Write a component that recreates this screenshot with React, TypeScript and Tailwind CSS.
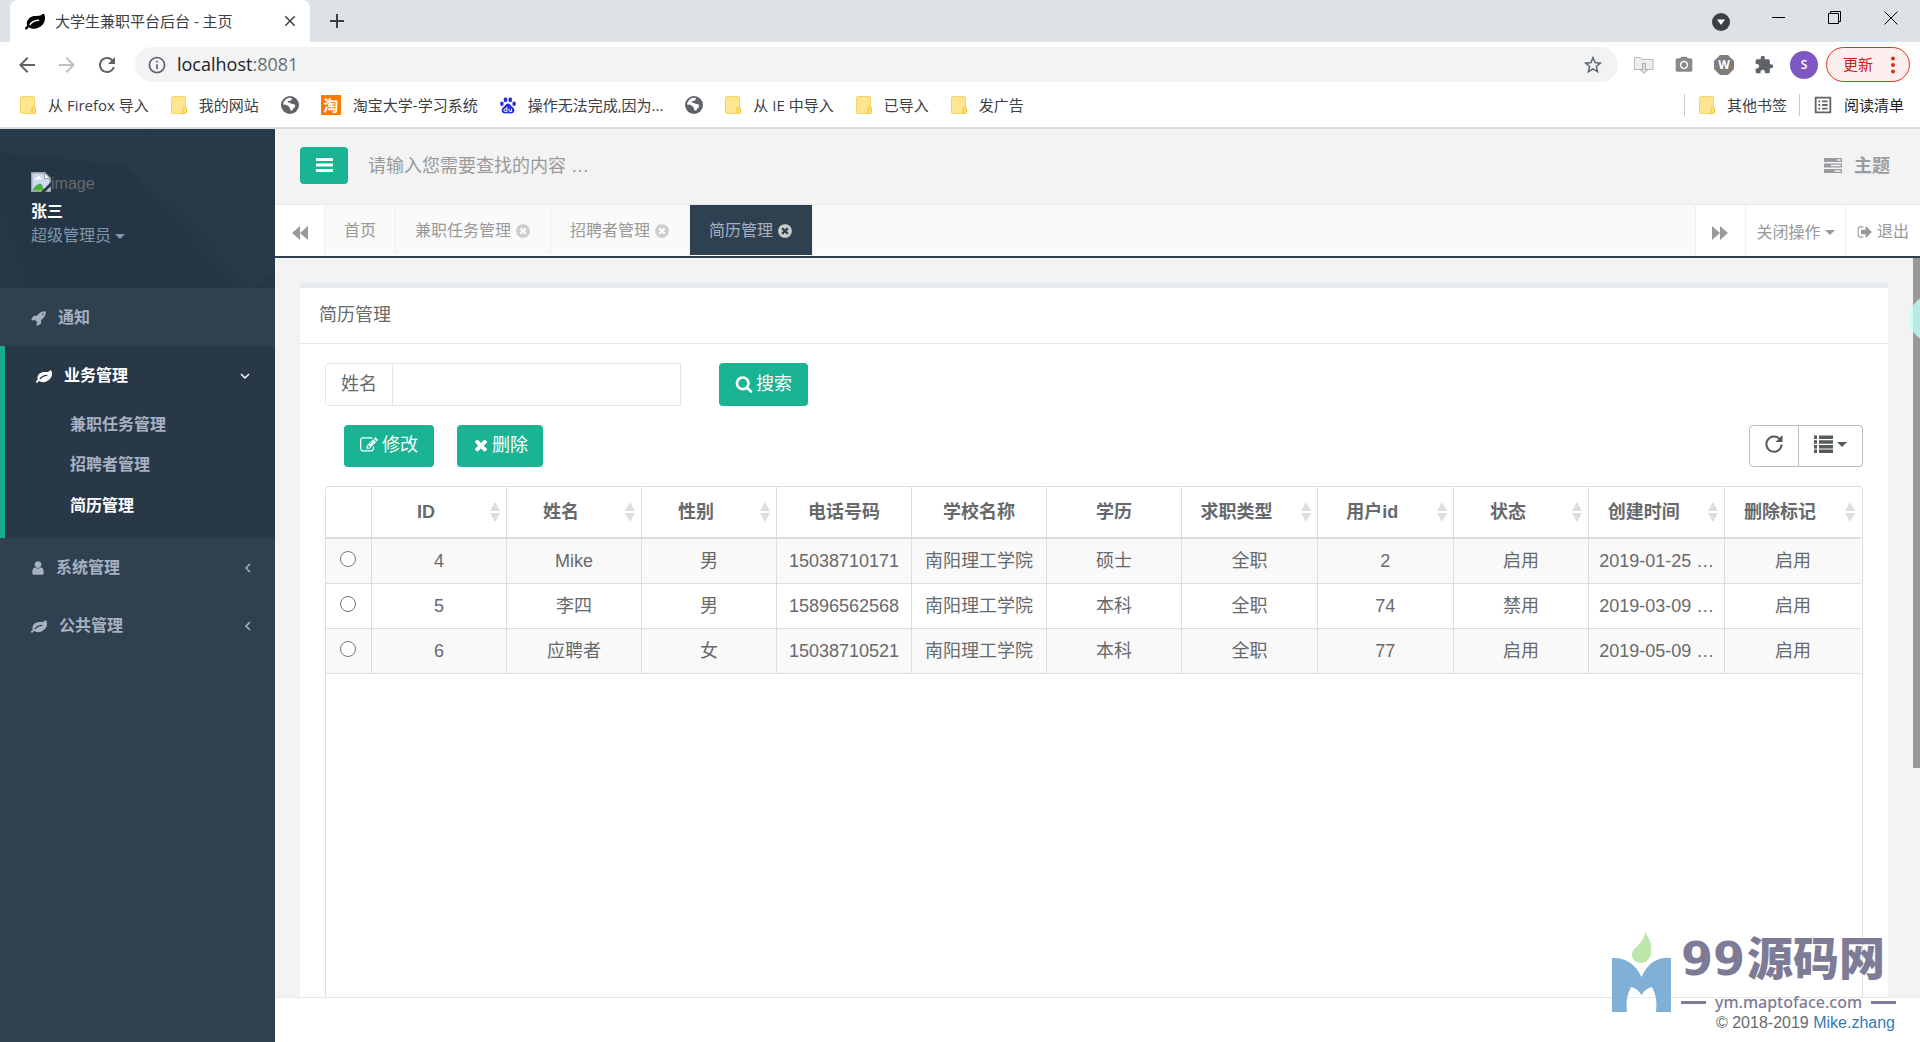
import React from 'react';
import {
  MdArrowBack,
  MdArrowForward,
  MdClose,
  MdExtension,
  MdInfoOutline,
  MdOutlineListAlt,
  MdPhotoCamera,
  MdRefresh,
  MdStarBorder,
} from 'react-icons/md';

const PATHS = {
  leaf: 'M1280 832q0-26-19-45t-45-19q-172 0-318 49.5t-259.5 134-235.5 219.5q-19 21-19 45 0 26 19 45t45 19q24 0 45-19 27-24 74-71t67-66q137-124 268.5-176t313.5-52q26 0 45-19t19-45zm512-198q0 95-20 193-46 224-184.5 383t-357.5 268q-214 108-438 108-148 0-286-47-15-5-88-42t-96-37q-16 0-39.5 32t-45 70-52.5 70-60 32q-43 0-63.5-17.5t-45.5-59.5q-2-4-6-11t-5.5-10-3-9.5-1.5-13.5q0-35 31-73.5t68-65.5 68-56 31-48q0-4-14-38t-16-44q-9-51-9-104 0-115 43.5-220t119-184.5 170.5-139 204-95.5q55-18 145-25.5t179.5-9 178.5-6 163.5-24 113.5-56.5l29.5-29.5 29.5-28 27-20 36.5-16 43.5-4.5q39 0 70.5 46t47.5 112 24 124 8 96z',
  user: 'M1536 1399q0 109-62.5 187t-150.5 78h-854q-88 0-150.5-78t-62.5-187q0-85 8.5-160.5t31.5-152 58.5-131 94-89 134.5-34.5q131 128 313 128t313-128q76 0 134.5 34.5t94 89 58.5 131 31.5 152 8.5 160.5zm-256-887q0 159-112.5 271.5t-271.5 112.5-271.5-112.5-112.5-271.5 112.5-271.5 271.5-112.5 271.5 112.5 112.5 271.5z',
  rocket: 'M1440 448q0-40-28-68t-68-28-68 28-28 68 28 68 68 28 68-28 28-68zm224-288q0 249-75.5 430.5t-253.5 360.5q-81 80-195 176l-20 379q-2 16-16 26l-384 224q-7 4-16 4-12 0-23-9l-64-64q-13-14-8-32l85-276-281-281-276 85q-3 1-9 1-14 0-23-9l-64-64q-17-19-5-39l224-384q10-14 26-16l379-20q96-114 176-195 188-187 358-258t431-71q14 0 24 9.500t10 22.5z',
  timesCircle: 'M1277 1122q0-26-19-45l-181-181 181-181q19-19 19-45 0-27-19-46l-90-90q-19-19-46-19-26 0-45 19l-181 181-181-181q-19-19-45-19-27 0-46 19l-90 90q-19 19-19 46 0 26 19 45l181 181-181 181q-19 19-19 45 0 27 19 46l90 90q19 19 46 19 26 0 45-19l181-181 181 181q19 19 45 19 27 0 46-19l90-90q19-19 19-46zm387-226q0 209-103 385.5t-279.5 279.5-385.5 103-385.5-103-279.5-279.5-103-385.500 103-385.5 279.5-279.5 385.5-103 385.5 103 279.5 279.5 103 385.5z',
  times: 'M1490 1322q0 40-28 68l-136 136q-28 28-68 28t-68-28l-294-294-294 294q-28 28-68 28t-68-28l-136-136q-28-28-28-68t28-68l294-294-294-294q-28-28-28-68t28-68l136-136q28-28 68-28t68 28l294 294 294-294q28-28 68-28t68 28l136 136q28 28 28 68t-28 68l-294 294 294 294q28 28 28 68z',
  edit: 'M888 1184l116-116-152-152-116 116v56h96v96h56zm440-720q-16-16-33 1l-350 350q-17 17-1 33t33-1l350-350q17-17 1-33zm80 594v190q0 119-84.5 203.5t-203.5 84.5h-832q-119 0-203.5-84.5t-84.5-203.5v-832q0-119 84.500-203.5t203.5-84.5h832q63 0 117 25 15 7 18 23 3 17-9 29l-49 49q-14 14-32 8-23-6-45-6h-832q-66 0-113 47t-47 113v832q0 66 47 113t113 47h832q66 0 113-47t47-113v-126q0-13 9-22l64-64q15-15 35-7t20 29zm-96-738l288 288-672 672h-288v-288zm444 132l-92 92-288-288 92-92q28-28 68-28t68 28l152 152q28 28 28 68t-28 68z',
  search: 'M1216 832q0-185-131.5-316.5t-316.5-131.5-316.5 131.5-131.5 316.5 131.5 316.5 316.5 131.5 316.5-131.5 131.5-316.5zm512 832q0 52-38 90t-90 38q-54 0-90-38l-343-342q-179 124-399 124-143 0-273.5-55.5t-225-150-150-225-55.5-273.5 55.5-273.5 150-225 225-150 273.5-55.5 273.5 55.5 225 150 150 225 55.5 273.5q0 220-124 399l343 343q37 37 37 90z',
  signOut: 'M704 1440q0 4 1 20t.5 26.5-3 23.5-10 19.5-20.5 6.5h-320q-119 0-203.5-84.5t-84.5-203.5v-704q0-119 84.5-203.5t203.5-84.5h320q13 0 22.5 9.5t9.5 22.5q0 4 1 20t.5 26.5-3 23.5-10 19.5-20.5 6.5h-320q-66 0-113 47t-47 113v704q0 66 47 113t113 47h312l11.5 1 11.5 3 8 5.5 7 9 2 13.5zm928-544q0 26-19 45l-544 544q-19 19-45 19t-45-19-19-45v-288h-448q-26 0-45-19t-19-45v-384q0-26 19-45t45-19h448v-288q0-26 19-45t45-19 45 19l544 544q19 19 19 45z',
};

type IconProps = { name: keyof typeof PATHS; className?: string };

const Icon: React.FC<IconProps> = ({ name, className = 'size-4' }) => (
  <svg viewBox="0 0 1792 1792" fill="currentColor" className={`shrink-0 ${className}`} aria-hidden="true">
    <path d={PATHS[name]} />
  </svg>
);

const Caret: React.FC = () => (
  <svg viewBox="0 0 10 5" fill="currentColor" className="h-[5px] w-2.5 shrink-0" aria-hidden="true">
    <path d="M0 0h10L5 5z" />
  </svg>
);

const Chevron: React.FC<{ open?: boolean }> = ({ open }) => (
  <svg viewBox="0 0 10 10" fill="none" stroke="currentColor" strokeWidth="1.5" className="size-2.5" aria-hidden="true">
    <path d={open ? 'M1 3l4 4 4-4' : 'M7 1L3 5l4 4'} />
  </svg>
);

const Folder: React.FC = () => (
  <svg viewBox="0 0 16 18" className="h-[18px] w-4 shrink-0" aria-hidden="true">
    <rect x="0.500" y="0.500" width="14" height="17" rx="1" fill="#ffe591" stroke="#f6d367" />
    <rect x="12" y="11.500" width="3.500" height="6" rx="1" fill="#ffe27a" stroke="#f0c437" />
  </svg>
);

// dark globe with light continents
const Globe: React.FC = () => (
  <svg viewBox="0 0 18 18" className="size-[18px] shrink-0" aria-hidden="true">
    <circle cx="9" cy="9" r="9" fill="#5f6368" />
    <path d="M2 8.500q3 0 5 1.200t2 3.300q0 1.500 1.500 1.500t1.700-2q2-.5 2-2.700 0-1.800-2.500-1.800-1.200 0-2.200-.8-1-1-2.500-.7Q6 6.500 7 5q2.500.3 3.500-1.200L11 2Q4 .500 2 8.500z" fill="#fff" />
  </svg>
);

const Taobao: React.FC = () => (
  <span className="flex size-5 items-center justify-center bg-[#ff7a00] text-[15px] leading-none font-bold text-white">淘</span>
);

const Baidu: React.FC = () => (
  <svg viewBox="0 0 16 17" fill="#2932e1" className="h-[17px] w-4 shrink-0" aria-hidden="true">
    <ellipse cx="1.900" cy="6.800" rx="1.800" ry="2.300" />
    <ellipse cx="5.500" cy="2.700" rx="1.900" ry="2.500" />
    <ellipse cx="10.300" cy="2.700" rx="1.900" ry="2.500" />
    <ellipse cx="14.100" cy="6.800" rx="1.800" ry="2.300" />
    <path d="M8 6.500c2 0 2.500 1.600 4 3 1.500 1.300 2.600 2.400 2.400 4.300-.3 2-1.900 2.900-3.700 2.700-1.800-.2-3.600-.2-5.400 0-1.800.2-3.400-.7-3.700-2.700-.2-1.900.9-3 2.400-4.300 1.500-1.400 2-3 4-3z" />
    <path d="M6.800 10v4.500H5.300a1.300 1.300 0 010-2.600h1.500M9 11.700v1.800q0 1 1 1h1.500v-2.800" fill="none" stroke="#fff" />
  </svg>
);

const bookmarks = [
  { icon: <Folder />, label: '从 Firefox 导入' },
  { icon: <Folder />, label: '我的网站' },
  { icon: <Globe />, label: '' },
  { icon: <Taobao />, label: '淘宝大学-学习系统' },
  { icon: <Baidu />, label: '操作无法完成,因为...' },
  { icon: <Globe />, label: '' },
  { icon: <Folder />, label: '从 IE 中导入' },
  { icon: <Folder />, label: '已导入' },
  { icon: <Folder />, label: '发广告' },
];

const BrowserChrome: React.FC = () => (
  <header className="shrink-0 border-b-2 border-[#dadce0] bg-white font-['Open_Sans','Noto_Sans_CJK_SC',sans-serif] text-[15px] text-[#3c4043]">
    {/* tab strip */}
    <div className="flex h-[42px] items-stretch bg-[#dee1e6] pl-2.5">
      <div className="flex w-[300px] items-center rounded-t-lg bg-white pr-[11px] pl-[15px]">
        <Icon name="leaf" className="size-5 text-black" />
        <span className="ml-2.5 flex-1 whitespace-nowrap">大学生兼职平台后台 - 主页</span>
        <button type="button" aria-label="关闭标签页"><MdClose className="size-[18px]" /></button>
      </div>
      <button type="button" aria-label="新标签页" className="ml-[19px]">
        <svg viewBox="0 0 16 16" stroke="currentColor" strokeWidth="2" className="size-4" aria-hidden="true"><path d="M8 1v14M1 8h14" /></svg>
      </button>
      <div className="ml-auto flex items-center gap-[42px] pr-[22px] pb-1.5 text-black">
        <svg viewBox="0 0 18 18" className="size-[18px] translate-y-1" aria-hidden="true">
          <circle cx="9" cy="9" r="9" fill="#3c4043" />
          <path d="M5 6.500h8L9 12z" fill="#fff" />
        </svg>
        <svg viewBox="0 0 14 14" stroke="currentColor" className="size-3.5" aria-hidden="true"><path d="M0 6.500h13" /></svg>
        <svg viewBox="0 0 14 14" fill="none" stroke="currentColor" className="size-3.5" aria-hidden="true"><path d="M.5 2.500h10v10h-10zM2.500 2.500v-2h10v10h-2" /></svg>
        <svg viewBox="0 0 14 14" stroke="currentColor" className="size-3.5" aria-hidden="true"><path d="M.5.5l13 13M13.500.5l-13 13" /></svg>
      </div>
    </div>

    {/* address bar */}
    <div className="flex h-[45px] items-center pr-2.5 pl-[15px] text-[#5f6368]">
      <button type="button" aria-label="后退"><MdArrowBack className="size-6" /></button>
      <button type="button" aria-label="前进" className="ml-4 text-[#bdbfc2]"><MdArrowForward className="size-6" /></button>
      <button type="button" aria-label="刷新" className="ml-4"><MdRefresh className="size-6" /></button>
      <div className="ml-4 flex h-[35px] flex-1 items-center rounded-full bg-[#f1f3f4] pr-3.5 pl-3">
        <MdInfoOutline className="size-5" />
        <span className="ml-2.5 flex-1 pb-px text-lg leading-6 text-[#202124]">localhost<span className="text-[#6b6f74]">:8081</span></span>
        <MdStarBorder className="size-[22px]" />
      </div>
      <div className="ml-4 flex items-center gap-5">
        <svg viewBox="0 0 20 20" className="size-5" aria-hidden="true">
          <path d="M.5 14.500V2.500h6l1.500 2h11v10z" fill="#eee" stroke="#b8b8b8" />
          <path d="M8.500 8.500h3v6h2.500l-4 4-4-4h2.500z" fill="#ddd" stroke="#aaa" />
        </svg>
        <MdPhotoCamera className="size-5 text-[#8a8a8a]" />
        <span className="relative flex size-5 items-center justify-center text-xs font-bold text-white">
          <svg viewBox="0 0 20 20" fill="#7d7d7d" className="absolute inset-0 size-5" aria-hidden="true"><path d="M6 0h8l6 6v8l-6 6H6l-6-6V6z" /></svg>
          <span className="relative">W</span>
        </span>
        <MdExtension className="size-5" />
      </div>
      <span className="ml-4 flex size-7 items-center justify-center rounded-full bg-[#7e57c2] text-xs font-semibold text-white">S</span>
      <button type="button" className="ml-2 flex h-[35px] w-[84px] items-center justify-between rounded-full border border-[#d93025] bg-[#fceeed] pr-3.5 pl-4 text-[#c5221f]">
        更新
        <svg viewBox="0 0 4 18" fill="#d93025" className="h-[18px] w-1" aria-hidden="true"><circle cx="2" cy="2.500" r="2" /><circle cx="2" cy="9" r="2" /><circle cx="2" cy="15.500" r="2" /></svg>
      </button>
    </div>

    {/* bookmarks */}
    <nav className="flex h-10 items-center gap-[22px] pr-4 pb-1 pl-5 whitespace-nowrap">
      {bookmarks.map((b, i) => (
        <a key={i} href="#" aria-label={b.label || '书签'} className="flex items-center gap-3">
          {b.icon}
          {b.label && <span>{b.label}</span>}
        </a>
      ))}
      <div className="ml-auto flex items-center gap-3">
        <a href="#" className="flex items-center gap-3 border-l border-[#c8cacd] pl-3.5"><Folder />其他书签</a>
        <a href="#" className="flex items-center gap-2.5 border-l border-[#c8cacd] pl-3 text-[#202124]"><MdOutlineListAlt className="size-[22px] text-[#5f6368]" />阅读清单</a>
      </div>
    </nav>
  </header>
);

const Sidebar: React.FC = () => (
  <aside className="w-[275px] shrink-0 bg-[#2f4050] text-base font-bold text-[#a7b1c2]">
    <div className="relative h-[159px] overflow-hidden bg-[#253747] px-[31px] pt-[43px] font-normal">
      <svg viewBox="0 0 275 159" preserveAspectRatio="none" className="absolute inset-0 size-full" aria-hidden="true">
        <path d="M0 0h150l-25 36-125-12z" fill="#273a49" />
        <path d="M150 0h125v145l-25 14-125-123z" fill="#283a49" />
        <path d="M125 36l110 123H32L0 60V24z" fill="#243646" />
        <path d="M125 36l80 68 34 55h-5z" fill="#263848" />
      </svg>
      <div className="relative">
        <div className="flex h-5 items-center text-[#676a6c]">
          <svg viewBox="0 0 20 20" className="size-5" aria-hidden="true">
            <path d="M.7.700h13l5.600 5.600v13H.7z" fill="#c9d9f7" stroke="#a0a0a0" strokeWidth="1.400" />
            <path d="M13.500 1v5.500H19z" fill="#fff" stroke="#a0a0a0" />
            <path d="M4 7.500q0-2 2-2 1-2.500 3-.5 2 0 2 2.500z" fill="#fff" />
            <path d="M1.500 18.500q4-8 9-6.500l3 6.500z" fill="#4fb13b" />
            <path d="M10 20L20 10v4l-6 6z" fill="#253747" />
          </svg>
          <span className="pt-[3px]">image</span>
        </div>
        <p className="mt-2 leading-6 font-bold text-white">张三</p>
        <button type="button" className="flex items-center gap-1 leading-6 text-[#8095a8]">超级管理员<Caret /></button>
      </div>
    </div>

    <nav>
      <a href="#" className="flex h-[58px] items-center gap-[11px] pt-px pl-[31px]"><Icon name="rocket" />通知</a>
      <div className="border-l-[5px] border-[#19aa8d] bg-[#293846] pb-3">
        <button type="button" className="flex h-[59px] w-full items-center gap-3 pr-[25px] pl-[31px] text-white">
          <Icon name="leaf" />业务管理
          <span className="ml-auto"><Chevron open /></span>
        </button>
        <ul className="pl-[65px]">
          <li><a href="#" className="block h-[40px] leading-[40px]">兼职任务管理</a></li>
          <li><a href="#" className="block h-[40px] leading-[40px]">招聘者管理</a></li>
          <li><a href="#" className="block h-[41px] leading-[41px] text-white">简历管理</a></li>
        </ul>
      </div>
      <button type="button" className="flex h-[58px] w-full items-center gap-2.5 pt-px pr-[22px] pl-[30px]">
        <Icon name="user" />系统管理
        <span className="ml-auto"><Chevron /></span>
      </button>
      <button type="button" className="flex h-[58px] w-full items-center gap-3 pt-px pr-[22px] pl-[31px]">
        <Icon name="leaf" />公共管理
        <span className="ml-auto"><Chevron /></span>
      </button>
    </nav>
  </aside>
);

const TopBar: React.FC = () => (
  <div className="flex h-[75px] shrink-0 items-center px-[25px] pr-[30px] pb-0.5 text-lg text-[#999c9e]">
    <button type="button" aria-label="菜单" className="flex h-[37px] w-12 items-center justify-center rounded-sm bg-[#1ab394] pb-0.5 text-white">
      <svg viewBox="0 0 17 14" fill="currentColor" className="h-3.5 w-[17px]" aria-hidden="true">
        <path d="M0 0h17v3H0zM0 5.500h17v3H0zM0 11h17v3H0z" />
      </svg>
    </button>
    <input aria-label="查找" placeholder="请输入您需要查找的内容 …" className="ml-5 flex-1 bg-transparent outline-none placeholder:text-[#999]" />
    <a href="#" className="flex items-center gap-3 font-bold">
      <svg viewBox="0 0 18 15" className="h-[15px] w-[18px]" fill="currentColor" aria-hidden="true">
        <path fillRule="evenodd" d="M0 0h18v4H0zM13 1.300h3.700v1.400H13zM0 5.500h18v4H0zM7 6.800h9.700v1.400H7zM0 11h18v4H0zM10.500 12.300h6.200v1.400h-6.200z" />
      </svg>
      主题
    </a>
  </div>
);

const tabs = [
  { label: '首页', closable: false },
  { label: '兼职任务管理', closable: true },
  { label: '招聘者管理', closable: true },
  { label: '简历管理', closable: true, active: true },
];

const TabBar: React.FC = () => (
  <div className="flex h-[54px] shrink-0 border-t border-b-2 border-t-[#e7eaec] border-b-[#2f4050] bg-[#fafafa] text-base text-[#999]">
    <button type="button" aria-label="向左" className="flex w-[50px] items-center justify-center border-r border-[#eee] bg-white pt-1">
      <svg viewBox="0 0 16 14" fill="currentColor" className="h-3.5 w-4" aria-hidden="true"><path d="M8 0v14L0 7zM16 0v14L8 7z" /></svg>
    </button>
    <div className="flex flex-1 border-b border-white">
      {tabs.map((t) => (
        <a
          key={t.label}
          href="#"
          className={`flex items-center gap-1 border-r border-[#eee] px-[19px] pt-0.5 ${t.active ? 'bg-[#2f4050] text-[#a7b1c2]' : ''}`}
        >
          {t.label}
          {t.closable && <Icon name="timesCircle" className="size-4 text-[#ccc]" />}
        </a>
      ))}
    </div>
    <button type="button" aria-label="向右" className="flex w-[50px] items-center justify-center border-l border-[#eee] bg-white pt-1 pr-0.5">
      <svg viewBox="0 0 16 14" fill="currentColor" className="h-3.5 w-4" aria-hidden="true"><path d="M0 0v14l8-7zM8 0v14l8-7z" /></svg>
    </button>
    <button type="button" className="flex w-[100px] items-center justify-center gap-1 border-l border-[#eee] bg-white pt-1">关闭操作<Caret /></button>
    <a href="#" className="flex w-[75px] items-center justify-center gap-1 border-l border-[#eee] bg-white pt-0.5"><Icon name="signOut" />退出</a>
  </div>
);

const columns = [
  { label: 'ID', sort: true, fixed: true },
  { label: '姓名', sort: true, fixed: true },
  { label: '性别', sort: true, fixed: true },
  { label: '电话号码', sort: false, fixed: true },
  { label: '学校名称', sort: false, fixed: true },
  { label: '学历', sort: false, fixed: true },
  { label: '求职类型', sort: true },
  { label: '用户id', sort: true },
  { label: '状态', sort: true },
  { label: '创建时间', sort: true },
  { label: '删除标记', sort: true },
];

const rows = [
  ['4', 'Mike', '男', '15038710171', '南阳理工学院', '硕士', '全职', '2', '启用', '2019-01-25 …', '启用'],
  ['5', '李四', '男', '15896562568', '南阳理工学院', '本科', '全职', '74', '禁用', '2019-03-09 …', '启用'],
  ['6', '应聘者', '女', '15038710521', '南阳理工学院', '本科', '全职', '77', '启用', '2019-05-09 …', '启用'],
];

const ResumeTable: React.FC = () => (
  <div className="mt-[19px] min-h-[540px] flex-1 rounded-t border border-[#ddd] pr-px">
    <table className="w-full table-fixed border-separate border-spacing-0 text-center whitespace-nowrap">
      <thead>
        <tr className="h-[52px]">
          <th aria-label="选择" className="w-[46px] border-r border-b-2 border-[#ddd]" />
          {columns.map((c) => (
            <th key={c.label} className={`border-r border-b-2 border-[#ddd] p-0 last:border-r-0 ${c.fixed ? 'w-[135px]' : ''}`}>
              <div className="flex items-center">
                <span className="flex-1">{c.label}</span>
                {c.sort && (
                  <svg viewBox="0 0 10 20" fill="#ddd" className="mr-1.5 ml-2.5 h-5 w-2.5" aria-hidden="true">
                    <path d="M5 0l5 9H0zM5 20l5-9H0z" />
                  </svg>
                )}
              </div>
            </th>
          ))}
        </tr>
      </thead>
      <tbody>
        {rows.map((r) => (
          <tr key={r[0]} className="h-[45px] odd:bg-[#f9f9f9]">
            <td className="border-r border-b border-[#ddd] pr-px pb-1">
              <input type="radio" name="row" aria-label={`选择 ${r[0]}`} className="mx-auto block size-4" />
            </td>
            {r.map((v, i) => (
              <td key={i} className="border-r border-b border-[#ddd] p-0 last:border-r-0">{v}</td>
            ))}
          </tr>
        ))}
      </tbody>
    </table>
  </div>
);

const ResumePanel: React.FC = () => (
  <section className="flex min-h-full flex-col border-t-[5px] border-[#e7eaec] bg-white text-lg">
    <h1 className="flex h-14 shrink-0 items-center border-b border-[#e7eaec] px-[19px] pb-0.5">简历管理</h1>
    <div className="flex flex-1 flex-col px-[25px] pt-[19px]">
      <form className="flex h-[43px] shrink-0" onSubmit={(e) => e.preventDefault()}>
        <label htmlFor="name" className="flex items-center rounded-l-sm border border-[#e5e6e7] px-[15px] pb-0.5">姓名</label>
        <input id="name" type="text" className="w-[288px] border border-l-0 border-[#e5e6e7] px-3 outline-none" />
        <button type="submit" className="ml-[38px] flex items-center gap-[3px] rounded-sm bg-[#1ab394] px-4 pb-0.5 text-white">
          <Icon name="search" className="size-[18px]" />搜索
        </button>
      </form>
      <div className="mt-[19px] flex h-[42px] shrink-0 pl-[19px]">
        <button type="button" className="flex items-center gap-1 rounded-sm bg-[#1ab394] px-4 pb-0.5 text-white">
          <Icon name="edit" className="size-[18px]" />修改
        </button>
        <button type="button" className="ml-[23px] flex items-center gap-0.5 rounded-sm bg-[#1ab394] px-[15px] pb-0.5 text-white">
          <Icon name="times" className="size-[18px]" />删除
        </button>
        <div className="ml-auto flex text-[#555a5d]">
          <button type="button" aria-label="刷新列表" className="flex w-[50px] items-center justify-center rounded-l-sm border border-[#bbb] pb-1">
            <svg viewBox="0 0 18 18" className="size-[18px]" aria-hidden="true">
              <path d="M14.800 4.200A7.600 7.600 0 1 0 16.600 9.500" fill="none" stroke="currentColor" strokeWidth="2" />
              <path d="M17.500 0v7h-7z" fill="currentColor" />
            </svg>
          </button>
          <button type="button" aria-label="列" className="flex w-16 items-center justify-center gap-1 rounded-r-sm border border-l-0 border-[#bbb] pb-1">
            <svg viewBox="0 0 19 18" fill="currentColor" className="h-[18px] w-[19px]" aria-hidden="true">
              <path d="M0 .5h3v3.500H0zM5 .5h14v3.500H5zM0 5.200h3v3.500H0zM5 5.200h14v3.500H5zM0 9.900h3v3.500H0zM5 9.900h14v3.500H5zM0 14.500h3v3.500H0zM5 14.500h14v3.500H5z" />
            </svg>
            <Caret />
          </button>
        </div>
      </div>
      <ResumeTable />
    </div>
  </section>
);

const Watermark: React.FC = () => (
  <div className="pointer-events-none absolute right-6 bottom-[30px] flex items-end gap-2.5 text-[#7d7b95]">
    <svg viewBox="0 0 59 80" className="h-20 w-[59px]" aria-hidden="true">
      <path d="M33 0c6 8 8 17 5 25-3 8-16 8-18-1-1-9 12-11 13-24z" fill="#bfe6aa" />
      <path d="M0 26q20-1 29.500 19Q39 24 59 26v54H44q2-14-4-25-6 1-10.500 8Q25 56 19 55q-6 11-4 25H0z" fill="#80b0d6" />
    </svg>
    <div className="w-[215px] pb-0.5">
      <div className="flex h-[62px] items-start gap-0.5 leading-none">
        <span className="pt-1 font-['DejaVu_Sans'] text-[46px] font-bold">99</span>
        <span className="font-['Noto_Sans_CJK_SC'] text-[46px] font-black">源码网</span>
      </div>
      <div className="flex items-center justify-between font-['Noto_Sans',sans-serif] text-base leading-4 font-medium">
        <span className="h-[3px] w-[25px] bg-current" />
        <span>ym.maptoface.com</span>
        <span className="h-[3px] w-[25px] bg-current" />
      </div>
    </div>
  </div>
);

const App: React.FC = () => {
  return (
    <div className="relative flex h-screen flex-col overflow-hidden bg-white font-['Liberation_Sans','Noto_Sans_CJK_SC',sans-serif] text-[#676a6c]">
      <BrowserChrome />
      <div className="flex min-h-0 flex-1">
        <Sidebar />
        <main className="flex min-w-0 flex-1 flex-col bg-[#f3f3f4]">
          <TopBar />
          <TabBar />
          <div className="relative min-h-0 flex-1 overflow-hidden pt-[25px] pr-8 pl-[25px]">
            <ResumePanel />
            {/* page scrollbar and the floating assistant bubble */}
            <div className="absolute top-0 right-0 h-[69%] w-[7px] bg-[#999]" />
            <div className="absolute top-[37px] -right-9 size-[47px] rounded-full bg-[#c0fff5]/80" />
          </div>
          <footer className="flex h-[45px] shrink-0 items-center justify-end border-t border-[#e7eaec] bg-white pt-1.5 pr-[25px] text-base">
            © 2018-2019&nbsp;<a href="#" className="text-[#337ab7]">Mike.zhang</a>
          </footer>
        </main>
      </div>
      <Watermark />
    </div>
  );
};

export default App;
